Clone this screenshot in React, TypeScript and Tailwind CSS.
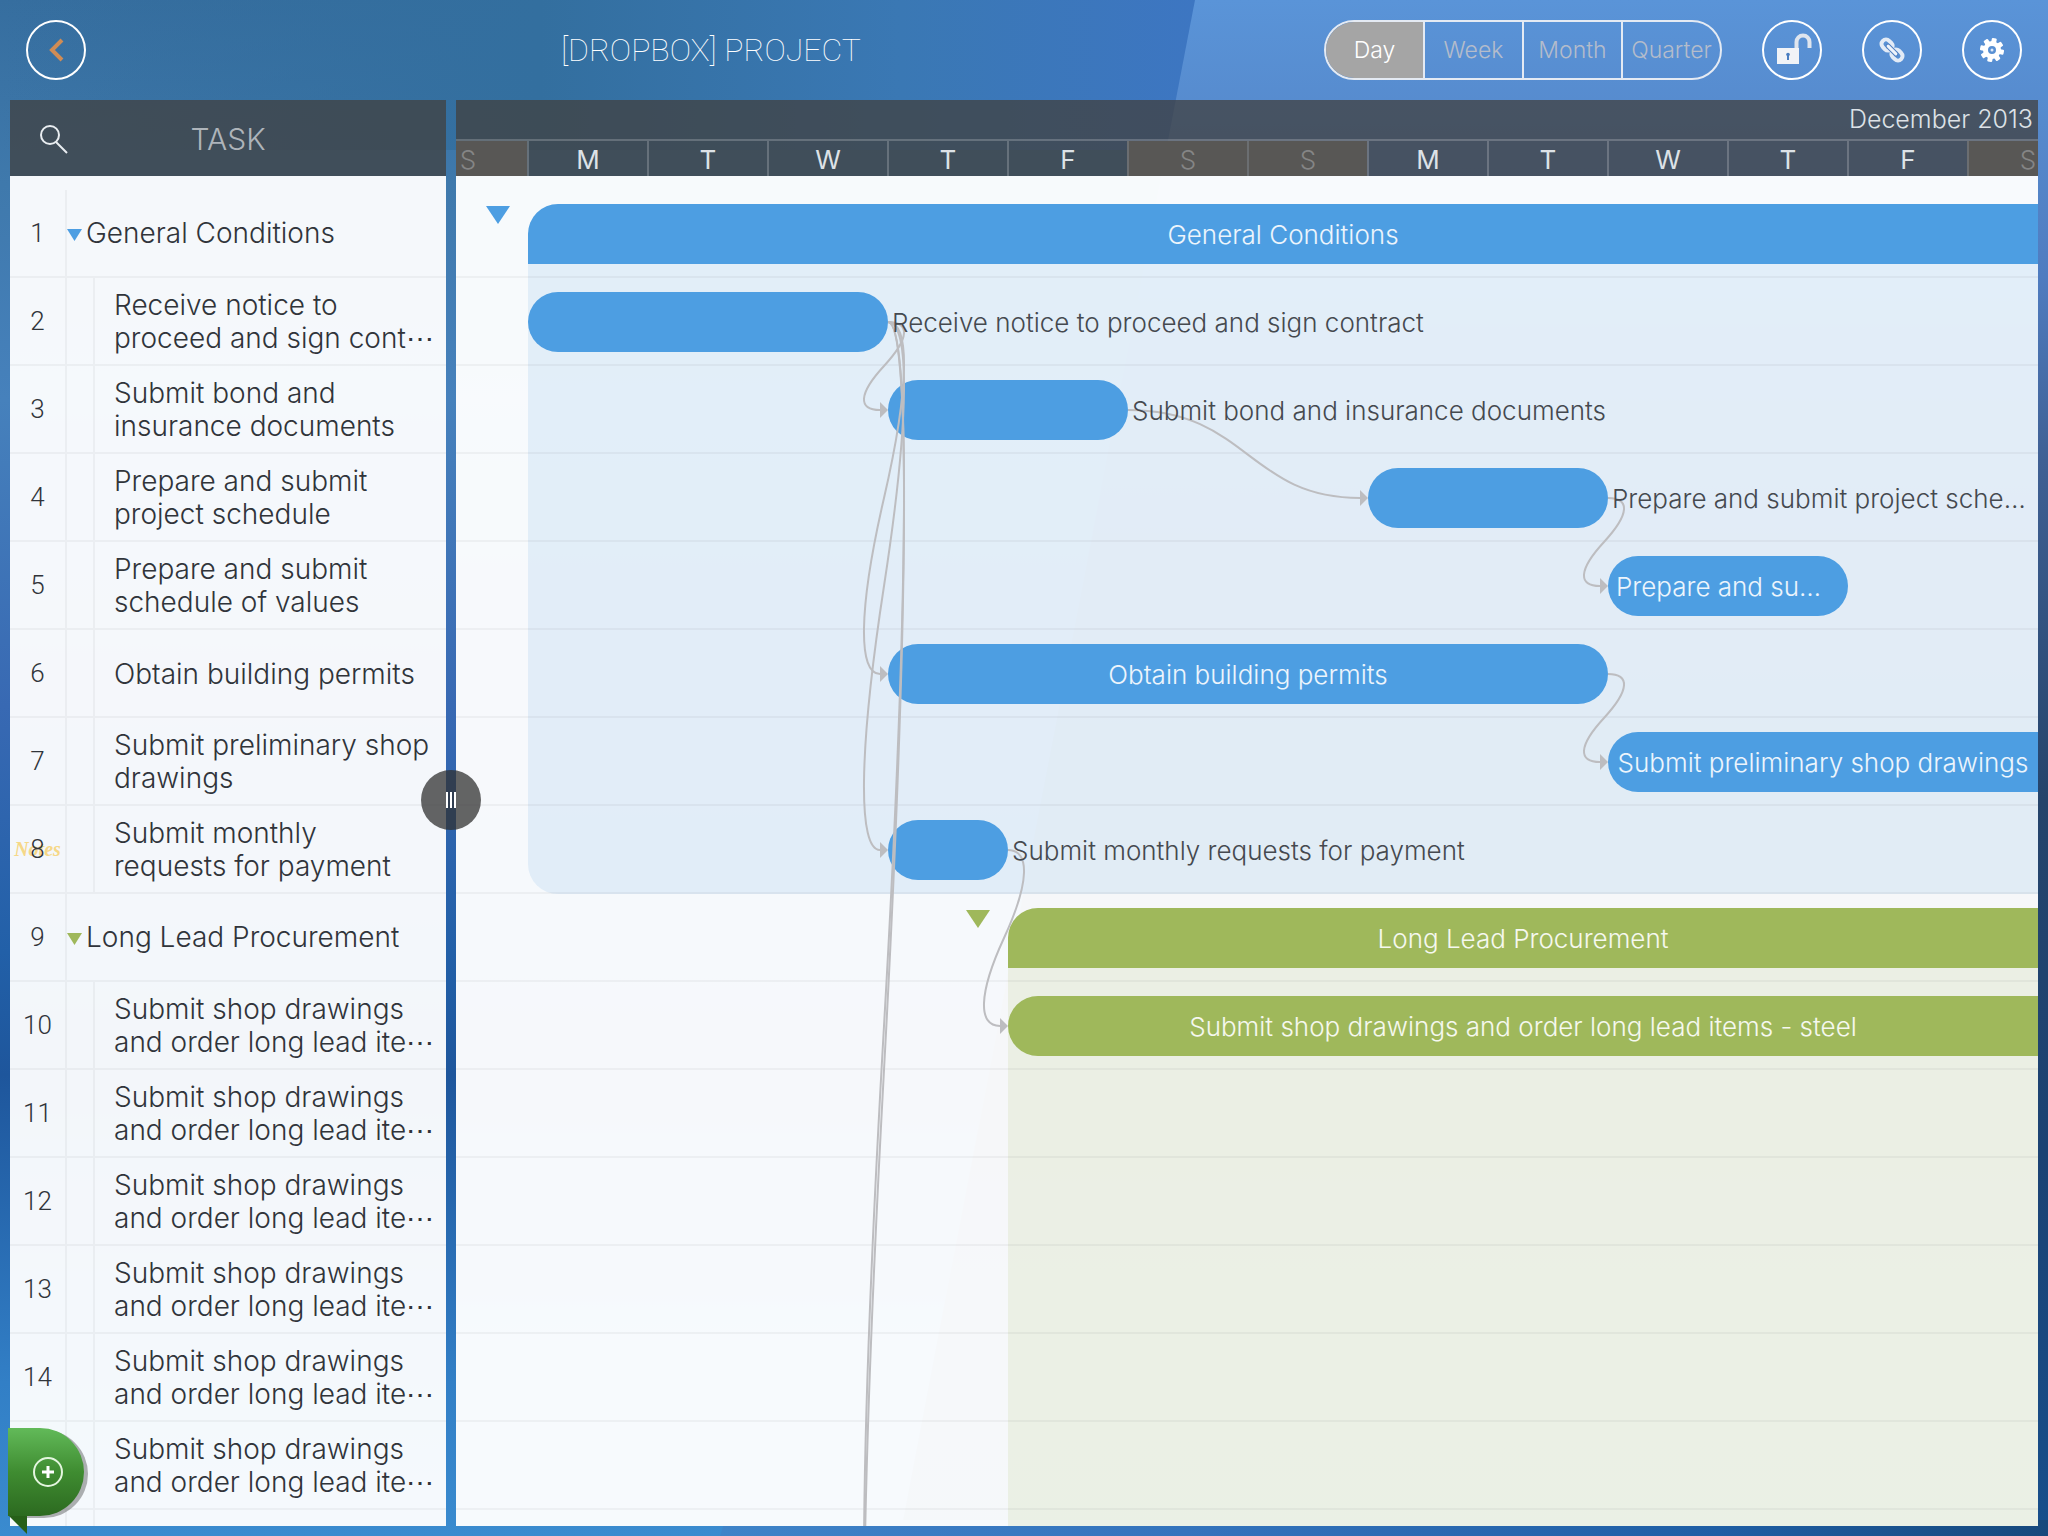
import { useState } from 'react';

const DAY = 120;
const ROW = 88;
const OFFSET = 48; // part of the first day that is scrolled out on the left

interface Task {
  id: number;
  name: string;
  parent?: boolean;
  notes?: boolean;
  start?: number;
  days?: number; // no days: the bar runs past the right edge
  inside?: string;
  outside?: string;
  clipped?: boolean;
}

interface Group {
  color: 'blue' | 'green';
  start: number;
  tasks: Task[];
}

interface LinkProps {
  fromRow: number;
  toRow: number;
  end: number;
  start: number;
}

const longLead = 'Submit shop drawings\nand order long lead ite⋯';

const groups: Group[] = [
  {
    color: 'blue',
    start: 1,
    tasks: [
      { id: 1, name: 'General Conditions', parent: true, start: 1, inside: 'General Conditions' },
      { id: 2, name: 'Receive notice to\nproceed and sign cont⋯', start: 1, days: 3, outside: 'Receive notice to proceed and sign contract' },
      { id: 3, name: 'Submit bond and\ninsurance documents', start: 4, days: 2, outside: 'Submit bond and insurance documents' },
      { id: 4, name: 'Prepare and submit\nproject schedule', start: 8, days: 2, outside: 'Prepare and submit project sche…' },
      { id: 5, name: 'Prepare and submit\nschedule of values', start: 10, days: 2, inside: 'Prepare and su…', clipped: true },
      { id: 6, name: 'Obtain building permits', start: 4, days: 6, inside: 'Obtain building permits' },
      { id: 7, name: 'Submit preliminary shop\ndrawings', start: 10, inside: 'Submit preliminary shop drawings' },
      { id: 8, name: 'Submit monthly\nrequests for payment', notes: true, start: 4, days: 1, outside: 'Submit monthly requests for payment' },
    ],
  },
  {
    color: 'green',
    start: 5,
    tasks: [
      { id: 9, name: 'Long Lead Procurement', parent: true, start: 5, inside: 'Long Lead Procurement' },
      { id: 10, name: longLead, start: 5, inside: 'Submit shop drawings and order long lead items - steel' },
      { id: 11, name: longLead },
      { id: 12, name: longLead },
      { id: 13, name: longLead },
      { id: 14, name: longLead },
      { id: 15, name: longLead },
    ],
  },
];

const links: LinkProps[] = [
  { fromRow: 2, toRow: 3, end: 4, start: 4 },
  { fromRow: 2, toRow: 6, end: 4, start: 4 },
  { fromRow: 2, toRow: 8, end: 4, start: 4 },
  { fromRow: 2, toRow: 18, end: 4, start: 4 },
  { fromRow: 2, toRow: 19, end: 4, start: 4 },
  { fromRow: 3, toRow: 4, end: 6, start: 8 },
  { fromRow: 4, toRow: 5, end: 10, start: 10 },
  { fromRow: 6, toRow: 7, end: 10, start: 10 },
  { fromRow: 8, toRow: 10, end: 5, start: 5 },
];

const days = ['S', 'M', 'T', 'W', 'T', 'F', 'S', 'S', 'M', 'T', 'W', 'T', 'F', 'S'];
const scales = ['Day', 'Week', 'Month', 'Quarter'];

const dayX = (day: number) => day * DAY - OFFSET;
const rowY = (row: number) => 14 + (row - 1) * ROW + 44;

const Wallpaper = () => (
  <svg className="absolute inset-0 -z-10 h-full w-full" viewBox="0 0 2048 1536" preserveAspectRatio="none" aria-hidden="true">
    <defs>
      <linearGradient id="left" x1="0" y1="0" x2="0" y2="1">
        <stop offset="0" stopColor="#366e9f" />
        <stop offset="0.12" stopColor="#3f79ac" />
        <stop offset="0.26" stopColor="#4681bc" />
        <stop offset="0.46" stopColor="#3869b3" />
        <stop offset="0.62" stopColor="#2260a8" />
        <stop offset="0.7" stopColor="#1e569c" />
        <stop offset="0.9" stopColor="#327fc6" />
        <stop offset="1" stopColor="#3a8bcf" />
      </linearGradient>
      <linearGradient id="top" x1="0" y1="0" x2="1" y2="0">
        <stop offset="0" stopColor="#336c9c" stopOpacity="0" />
        <stop offset="0.45" stopColor="#336f9f" />
        <stop offset="0.75" stopColor="#3a78b4" />
        <stop offset="1" stopColor="#3d76c2" />
      </linearGradient>
      <linearGradient id="right" x1="0" y1="0" x2="0" y2="1">
        <stop offset="0" stopColor="#5a94d8" />
        <stop offset="0.08" stopColor="#568acd" />
        <stop offset="0.18" stopColor="#4f7cc0" />
        <stop offset="0.3" stopColor="#3f6094" />
        <stop offset="0.52" stopColor="#25446b" />
        <stop offset="0.75" stopColor="#1b4273" />
        <stop offset="1" stopColor="#174f8c" />
      </linearGradient>
      <linearGradient id="bottom" x1="0" y1="0" x2="1" y2="0">
        <stop offset="0" stopColor="#3e83c8" />
        <stop offset="0.35" stopColor="#3573bd" />
        <stop offset="0.75" stopColor="#1f5ea5" />
        <stop offset="1" stopColor="#17497c" />
      </linearGradient>
    </defs>
    <rect width="2048" height="1536" fill="url(#left)" />
    <rect width="1200" height="150" fill="url(#top)" />
    <path d="M1195 0H2048V1536H900Z" fill="url(#right)" />
    <path d="M725 1520H2048V1536H720Z" fill="url(#bottom)" />
  </svg>
);

const BackIcon = () => (
  <svg className="h-full w-full" viewBox="0 0 56 56" fill="none" stroke="#d08c55" strokeWidth="4">
    <path d="M34 18L24 28L34 38" />
  </svg>
);

const UnlockIcon = () => (
  <svg className="h-full w-full" viewBox="0 0 56 56" fill="none">
    <path d="M32.500 27V20a6.500 6.500 0 0 1 13 0V26" stroke="#dfe5ee" strokeWidth="4" />
    <rect x="13" y="26" width="22" height="16" fill="#f1f3f7" />
    <circle cx="24" cy="32.500" r="1.800" fill="#4a7dc0" />
    <path d="M24 33V38" stroke="#4a7dc0" strokeWidth="2" />
  </svg>
);

const ChainIcon = () => (
  <svg className="h-full w-full" viewBox="0 0 56 56" fill="none">
    <g transform="rotate(45 28 28)">
      <rect x="15" y="23.500" width="12" height="9" rx="4.500" stroke="#e3ebf6" strokeWidth="4" />
      <rect x="29" y="23.500" width="12" height="9" rx="4.500" stroke="#e3ebf6" strokeWidth="4" />
      <path d="M22.500 28H33.500" stroke="#4f7fc2" strokeWidth="5" strokeLinecap="round" />
      <path d="M22.500 28H33.500" stroke="#eef3fa" strokeWidth="3" strokeLinecap="round" />
    </g>
  </svg>
);

const GearIcon = () => (
  <svg className="h-full w-full" viewBox="0 0 56 56" fill="none">
    <circle cx="28" cy="28" r="6.500" stroke="#ffffff" strokeWidth="5" />
    {[12, 57, 102, 147].map((angle) => (
      <g key={angle} transform={`rotate(${angle} 28 28)`} fill="#ffffff">
        <rect x="25.500" y="16" width="5" height="5" rx="1" />
        <rect x="25.500" y="35" width="5" height="5" rx="1" />
      </g>
    ))}
    <circle cx="28" cy="28" r="1.500" fill="#dfe9f7" />
  </svg>
);

const RoundButton = ({ label, children }: { label: string; children: React.ReactNode }) => (
  <button aria-label={label} className="size-[60px] shrink-0 rounded-full border-2 border-white">
    {children}
  </button>
);

const Triangle = ({ color, className }: { color: Group['color']; className: string }) => (
  <svg className={className} viewBox="0 0 24 18" preserveAspectRatio="none" aria-hidden="true">
    <path d="M0 0H24L12 18Z" fill={color === 'blue' ? '#4d9ee2' : '#9fb85b'} />
  </svg>
);

const TaskRow = ({ task, color }: { task: Task; color: Group['color'] }) => (
  <li className="flex h-[88px] border-b-2 border-black/4">
    <div className="relative flex w-[57px] shrink-0 items-center justify-center border-r-2 border-black/4">
      {task.notes && (
        <span className="absolute inset-x-0 text-center font-['Liberation_Serif',serif] text-[20px] font-bold text-[#f6d887] italic">
          Notes
        </span>
      )}
      <span className="relative font-['Roboto',sans-serif] text-[26px] font-light">{task.id}</span>
    </div>
    {task.parent ? (
      <button className="flex items-center gap-1 text-left">
        <Triangle color={color} className="mt-1 h-3 w-[15px]" />
        {task.name}
      </button>
    ) : (
      <>
        <div className="w-7 shrink-0 border-r-2 border-black/4" />
        <p className="self-center pt-[2px] pl-[19px] leading-[33px] whitespace-pre">{task.name}</p>
      </>
    )}
  </li>
);

const ChartRow = ({ task, color }: { task: Task; color: Group['color'] }) => {
  const fill = color === 'blue' ? 'bg-[#4d9ee2]' : 'bg-[#9fb85b]';
  const shape = task.parent ? 'rounded-tl-[30px]' : task.days ? 'rounded-full' : 'rounded-l-full';

  return (
    <div className="relative flex h-[88px] items-start border-b-2 border-black/4 pt-[14px]">
      {task.start !== undefined && (
        <>
          <div
            className="flex h-[60px] shrink-0 justify-end pt-[2px] pr-[18px]"
            style={{ width: dayX(task.start) }}
          >
            {task.parent && <Triangle color={color} className="h-[18px] w-6" />}
          </div>
          <div
            className={`flex h-[60px] items-center whitespace-nowrap text-white/90 ${fill} ${shape} ${
              task.days ? 'shrink-0' : 'min-w-0 flex-1'
            } ${task.clipped ? 'pl-2' : 'justify-center'}`}
            style={{ width: task.days ? task.days * DAY : undefined }}
          >
            {task.inside}
          </div>
          {task.outside && (
            <span className="relative z-10 pl-1 leading-[62px] whitespace-nowrap">{task.outside}</span>
          )}
        </>
      )}
    </div>
  );
};

const Link = ({ fromRow, toRow, end, start }: LinkProps) => {
  const x = dayX(end);
  const y = rowY(fromRow);
  const tx = dayX(start);
  const ty = rowY(toRow);
  const h = ty - y;

  const d =
    end === start
      ? `M${x} ${y}C${x + 22} ${y} ${x + 22} ${y + h * 0.18} ${x - 4} ${y + h / 2}C${x - 30} ${y + h * 0.82} ${x - 30} ${ty} ${x - 8} ${ty}`
      : `M${x} ${y}C${x + 120} ${y} ${x + 120} ${ty} ${tx - 8} ${ty}`;

  return (
    <>
      <path d={d} fill="none" stroke="#bdbdc0" strokeWidth="2" />
      <path d={`M${tx - 8} ${ty - 8}L${tx} ${ty}L${tx - 8} ${ty + 8}Z`} fill="#bdbdc0" />
    </>
  );
};

const App = () => {
  const [scale, setScale] = useState('Day');

  return (
    <div className="relative isolate flex h-screen flex-col overflow-hidden font-['Inter','Liberation_Sans',sans-serif] font-light">
      <Wallpaper />

      <header className="flex h-[100px] shrink-0 items-center gap-10 px-[26px]">
        <RoundButton label="Back">
          <BackIcon />
        </RoundButton>
        <h1 className="flex-1 pl-3 text-center font-['Roboto',sans-serif] text-[32px] font-thin text-white">
          [DROPBOX] PROJECT
        </h1>
        <div className="flex h-[60px] w-[398px] overflow-hidden rounded-full border-2 border-[#e4eaf3] text-[23px]">
          {scales.map((item) => (
            <button
              key={item}
              onClick={() => setScale(item)}
              className={`flex-1 basis-0 border-l-2 border-[#e4eaf3] first:border-l-0 ${
                item === scale ? 'bg-[#a5a5a5] text-white' : 'text-[#b4bccb]'
              }`}
            >
              {item}
            </button>
          ))}
        </div>
        <RoundButton label="Unlock">
          <UnlockIcon />
        </RoundButton>
        <RoundButton label="Links">
          <ChainIcon />
        </RoundButton>
        <RoundButton label="Settings">
          <GearIcon />
        </RoundButton>
      </header>

      <main className="flex min-h-0 flex-1 px-[10px] pb-[10px]">
        <section className="flex w-[436px] shrink-0 flex-col overflow-hidden text-[28px] text-[#30343a]">
          <div className="grid h-[76px] shrink-0 grid-cols-[72px_1fr_72px] items-center bg-[#42403f]/75 pt-[2px]">
            <button aria-label="Search" className="pl-[29px]">
              <svg className="size-[30px]" viewBox="0 0 30 30" fill="none" stroke="#e9edf1" strokeWidth="2">
                <circle cx="11" cy="11" r="9" />
                <path d="M17 18L28 29" />
              </svg>
            </button>
            <h2 className="text-center text-[30px] text-[#aeb4ba]">TASK</h2>
          </div>
          <div className="flex min-h-0 flex-1 flex-col overflow-hidden bg-white/95 pt-[14px]">
            <ul>
              {groups.map((group) =>
                group.tasks.map((task) => <TaskRow key={task.id} task={task} color={group.color} />)
              )}
            </ul>
            <div className="flex flex-1">
              <div className="w-[57px] border-r-2 border-black/4" />
              <div className="w-7 border-r-2 border-black/4" />
            </div>
          </div>
        </section>

        <div className="relative w-[10px] shrink-0">
          <button
            aria-label="Resize task list"
            className="absolute top-[47%] left-1/2 z-20 flex size-[60px] -translate-x-1/2 items-center justify-center gap-[2px] rounded-full bg-[#323232]/75"
          >
            <span className="h-4 w-[2px] bg-white" />
            <span className="h-4 w-[2px] bg-white" />
            <span className="h-4 w-[2px] bg-white" />
          </button>
        </div>

        <section className="flex min-w-0 flex-1 flex-col overflow-hidden text-[26px] text-[#45494f]">
          <div className="h-[76px] shrink-0 bg-[#42403f]/75 text-[#dde2e7]">
            <div className="flex h-[41px] items-center justify-end border-b-2 border-white/20 pr-[5px] text-[25px]">
              December 2013
            </div>
            <div className="-ml-[49px] flex h-[35px]">
              {days.map((day, i) => (
                <div
                  key={i}
                  className={`flex w-[120px] shrink-0 items-center justify-center border-l-2 pt-[2px] ${
                    day === 'S'
                      ? 'border-[#6b6e71] bg-[#585755] text-[#858585]'
                      : 'border-white/20 font-normal'
                  }`}
                >
                  {day}
                </div>
              ))}
            </div>
          </div>

          <div className="relative flex min-h-0 flex-1 flex-col overflow-hidden bg-white/96 pt-[14px]">
            {groups.map((group) => (
              <div key={group.color} className="relative shrink-0 last-of-type:flex-1">
                <div
                  className={`absolute top-11 right-0 bottom-0 ${
                    group.color === 'blue' ? 'rounded-bl-[30px] bg-[#4d9ee2]/12' : 'bg-[#9fb85b]/13'
                  }`}
                  style={{ left: dayX(group.start) }}
                />
                {group.tasks.map((task) => (
                  <ChartRow key={task.id} task={task} color={group.color} />
                ))}
              </div>
            ))}
            <svg className="pointer-events-none absolute inset-0 h-full w-full" aria-hidden="true">
              {links.map((link) => (
                <Link key={`${link.fromRow}-${link.toRow}`} {...link} />
              ))}
            </svg>
          </div>
        </section>
      </main>

      <button aria-label="Add task" className="absolute bottom-[2px] left-2 z-20">
        <svg className="h-[110px] w-[82px]" viewBox="0 0 82 110" fill="none">
          <defs>
            <linearGradient id="add" x1="0" y1="0" x2="0" y2="1">
              <stop offset="0" stopColor="#62ba59" />
              <stop offset="0.5" stopColor="#3f8c31" />
              <stop offset="1" stopColor="#2c6a20" />
            </linearGradient>
          </defs>
          <path d="M2 6H36a44 44 0 0 1 0 88H8Z" fill="#000000" opacity="0.3" />
          <path d="M0 4H32a44 44 0 0 1 0 88H0Z" fill="url(#add)" />
          <path d="M1 92H19V110Z" fill="#276019" />
          <circle cx="40" cy="48" r="14" stroke="#e4f6df" strokeWidth="2" />
          <path d="M34 48H46M40 42V54" stroke="#ffffff" strokeWidth="3" />
        </svg>
      </button>
    </div>
  );
};

export default App;
